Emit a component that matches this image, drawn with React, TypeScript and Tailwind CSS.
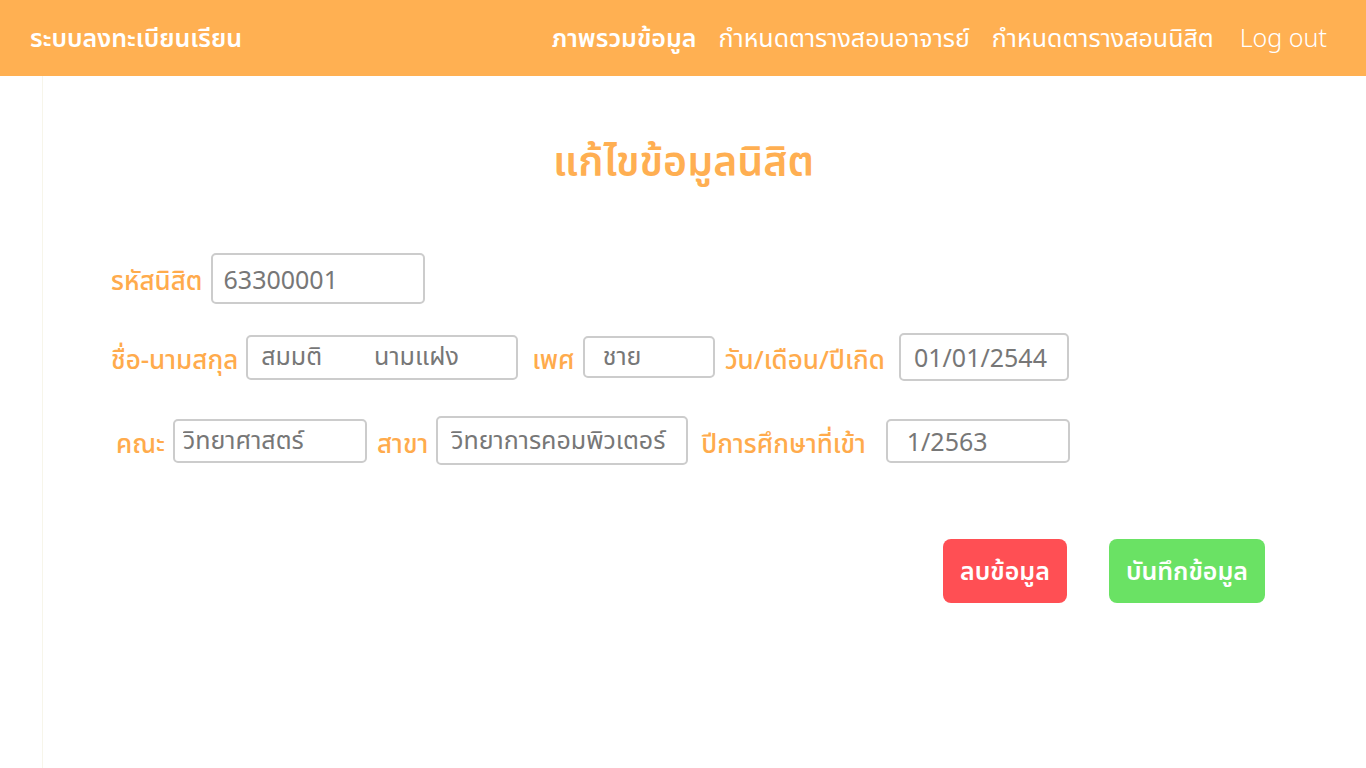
import React from "react";

const font = "font-['Noto_Sans','Noto_Sans_Thai','Liberation_Sans',sans-serif]";

function Field({
  value,
  className,
}: {
  value: string;
  className: string;
}) {
  return (
    <input
      readOnly
      defaultValue={value}
      className={`rounded-[5px] border-2 border-[#cccccc] bg-white text-[25px] text-[#777777] outline-none ${font} ${className}`}
    />
  );
}

function Label({ children, className = "" }: { children: React.ReactNode; className?: string }) {
  return (
    <span className={`whitespace-nowrap text-[26px] font-medium text-[#ffab4c] ${className}`}>
      {children}
    </span>
  );
}

export default function App() {
  return (
    <div className={`flex min-h-screen flex-col bg-white ${font}`}>
      <header className="flex h-[76px] shrink-0 items-center justify-between bg-[#ffb052] pl-[30px] pr-[39px] text-white">
        <span className="text-[25px] font-semibold">ระบบลงทะเบียนเรียน</span>
        <nav className="flex items-center gap-[22px] text-[25px]">
          <a className="font-semibold">ภาพรวมข้อมูล</a>
          <a>กำหนดตารางสอนอาจารย์</a>
          <a>กำหนดตารางสอนนิสิต</a>
          <a className="ml-[4px] font-light">Log out</a>
        </nav>
      </header>

      <main className="mx-[42px] flex flex-1 flex-col border-l border-[#f7f5ea] pb-[160px]">
        <h1 className="mt-[54px] text-center text-[41px] font-semibold leading-[60px] text-[#ffaf52]">
          แก้ไขข้อมูลนิสิต
        </h1>

        <div className="mt-[63px] flex items-center gap-[8px] pl-[68px]">
          <Label className="mt-[4px]">รหัสนิสิต</Label>
          <Field value="63300001" className="h-[51px] w-[214px] pl-[11px]" />
        </div>

        <div className="mt-[29px] flex items-center pl-[68px]">
          <Label className="mt-[4px]">ชื่อ-นามสกุล</Label>
          <Field value={"สมมติ\u00a0\u00a0\u00a0\u00a0\u00a0\u00a0\u00a0\u00a0นามแฝง"} className="ml-[8px] h-[45px] w-[272px] pl-[13px]" />
          <Label className="ml-[14px] mt-[4px]">เพศ</Label>
          <Field value="ชาย" className="ml-[8px] h-[42px] w-[132px] pl-[18px]" />
          <Label className="ml-[10px] mt-[4px]">วัน/เดือน/ปีเกิด</Label>
          <Field value="01/01/2544" className="ml-[14px] h-[48px] w-[170px] pl-[13px]" />
        </div>

        <div className="mt-[35px] flex items-center pl-[73px]">
          <Label className="mt-[6px]">คณะ</Label>
          <Field value="วิทยาศาสตร์" className="ml-[8px] h-[44px] w-[194px] pl-[8px]" />
          <Label className="ml-[10px] mt-[6px]">สาขา</Label>
          <Field value="วิทยาการคอมพิวเตอร์" className="ml-[8px] h-[49px] w-[252px] pl-[13px]" />
          <Label className="ml-[13px] mt-[6px]">ปีการศึกษาที่เข้า</Label>
          <Field value="1/2563" className="ml-[20px] h-[44px] w-[184px] pl-[19px]" />
        </div>

        <div className="mt-[74px] flex justify-end gap-[42px] pr-[59px]">
          <button className="h-[64px] w-[124px] rounded-[8px] bg-[#ff4f54] text-[25px] font-semibold text-white">
            ลบข้อมูล
          </button>
          <button className="h-[64px] w-[156px] rounded-[8px] bg-[#6ae264] text-[25px] font-semibold text-white">
            บันทึกข้อมูล
          </button>
        </div>
      </main>
    </div>
  );
}
